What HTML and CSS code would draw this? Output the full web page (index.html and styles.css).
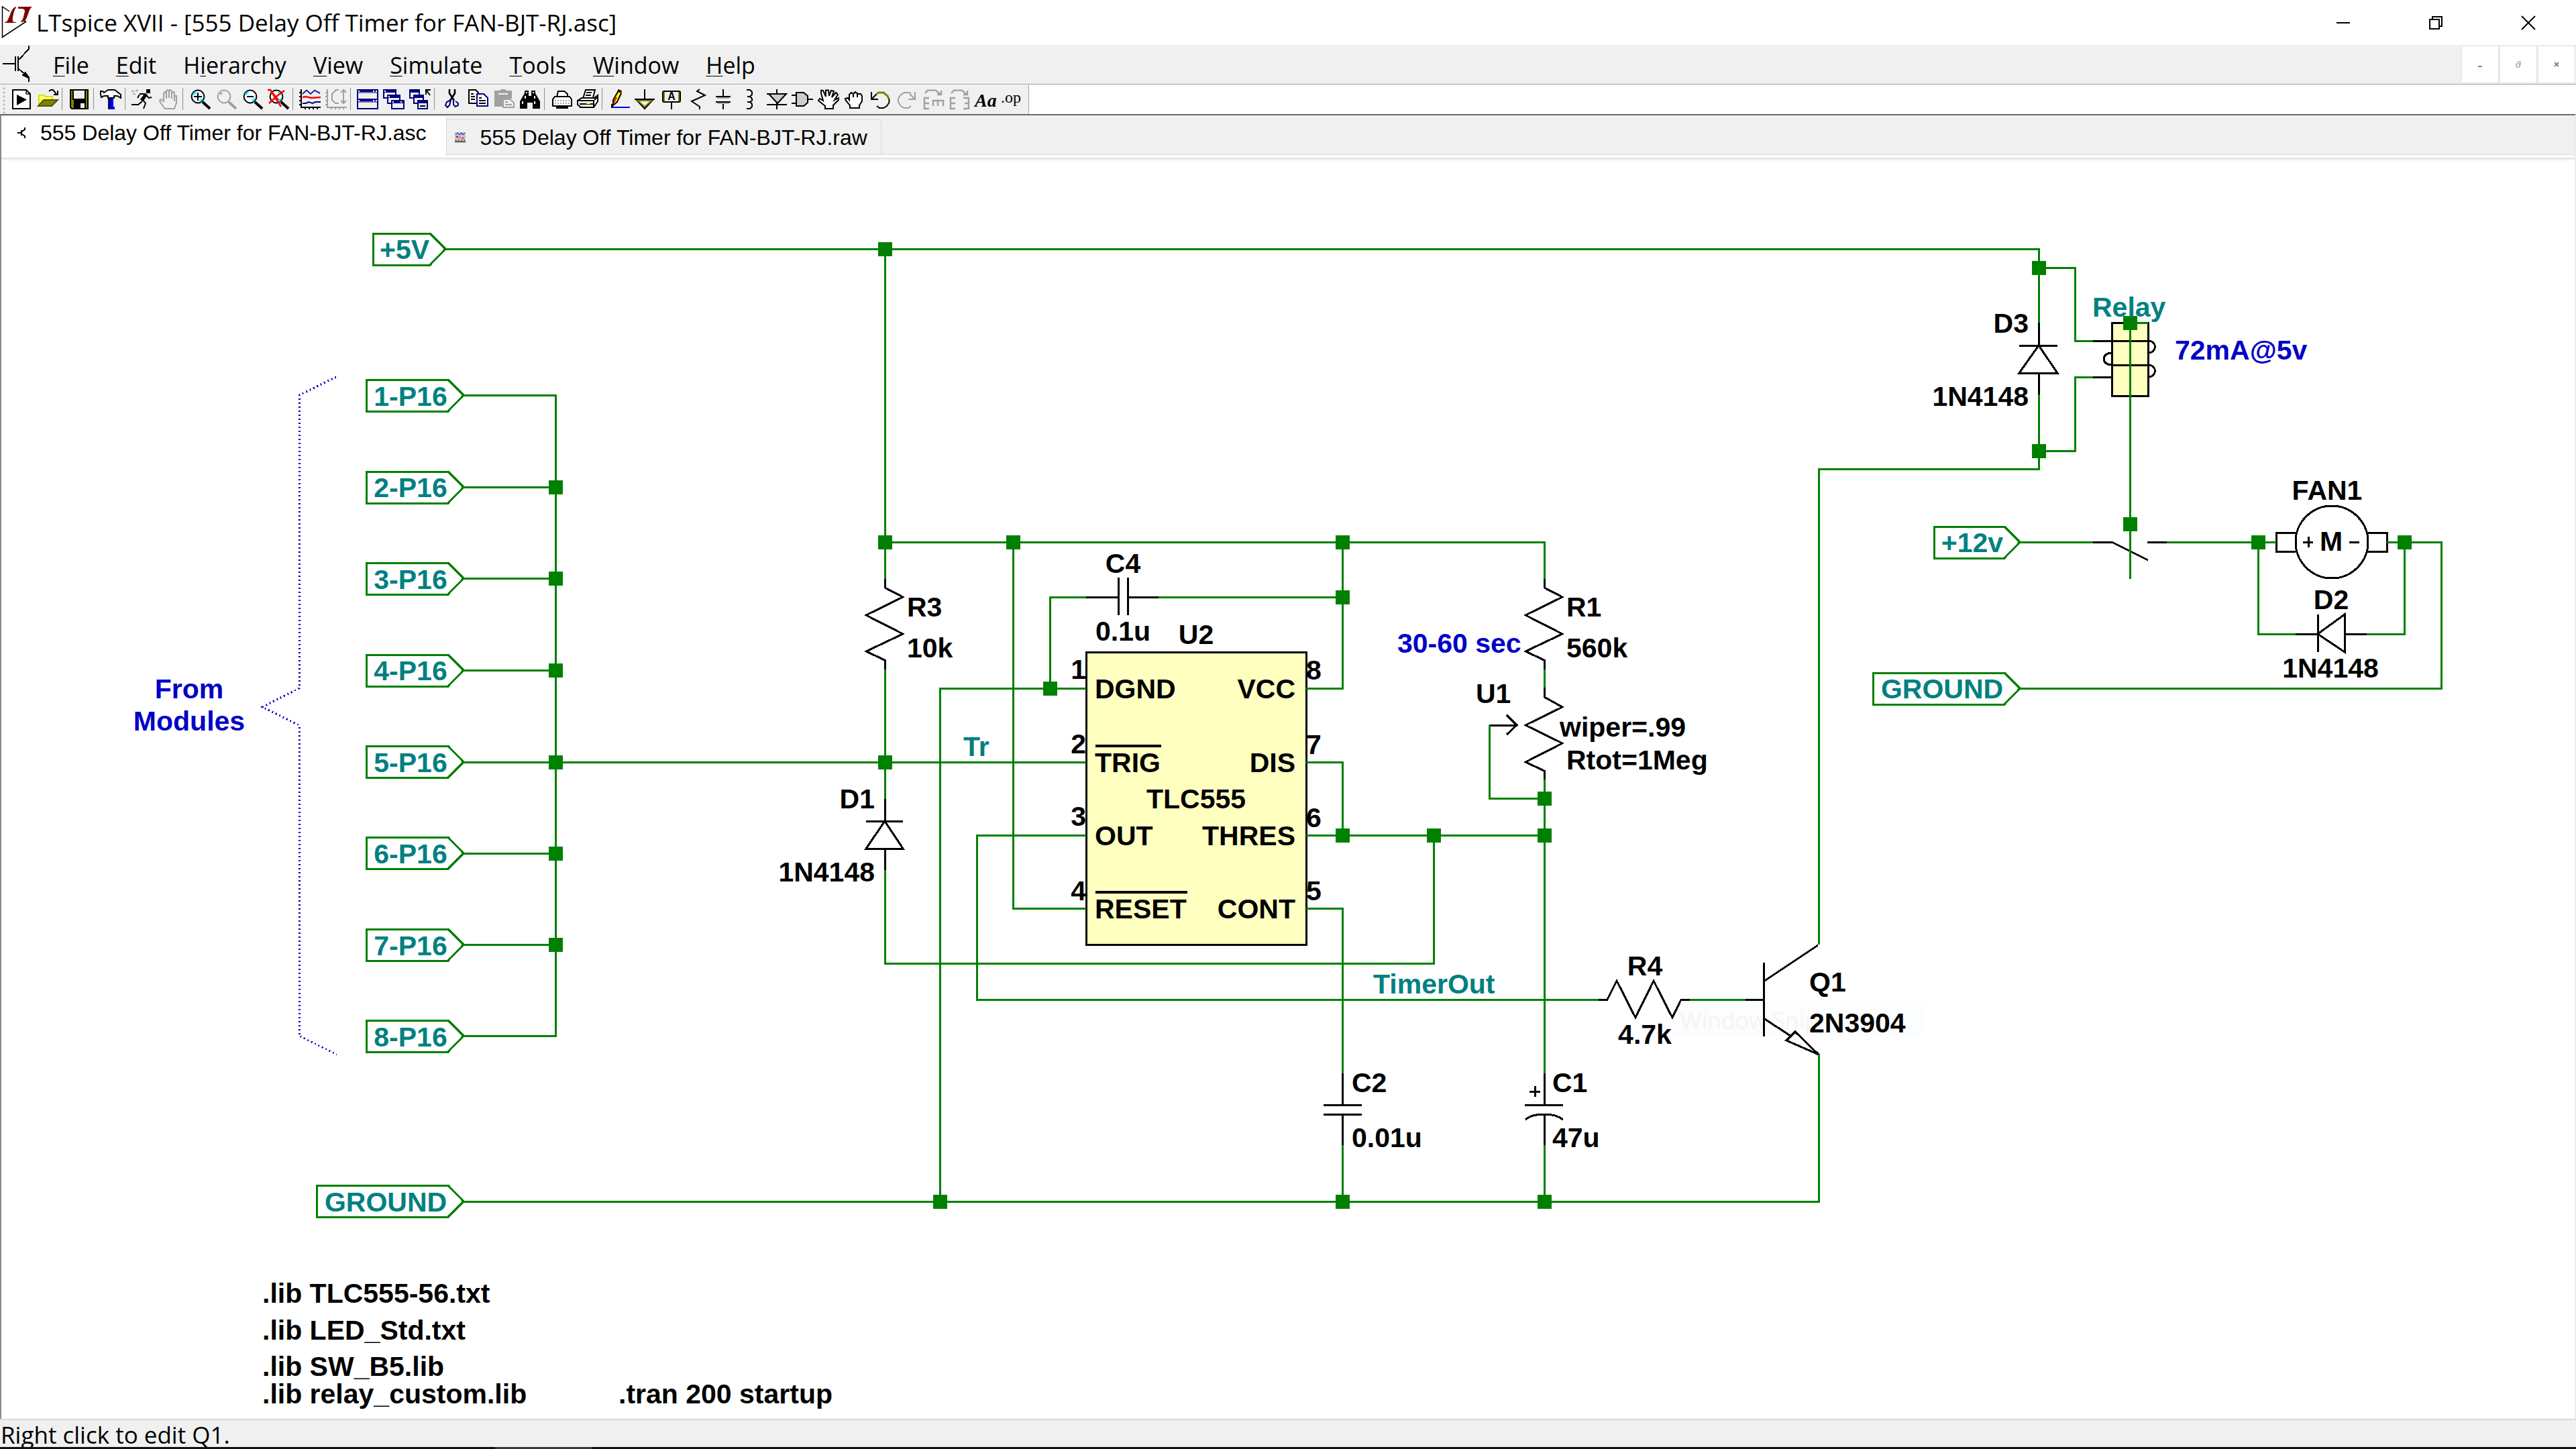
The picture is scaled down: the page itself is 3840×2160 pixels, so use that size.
FILE: index.html
```html
<!DOCTYPE html>
<html lang="en">
<head>
<meta charset="utf-8">
<title>LTspice XVII - [555 Delay Off Timer for FAN-BJT-RJ.asc]</title>
<link rel="stylesheet" href="styles.css">
</head>
<body>
<header class="titlebar">
  <svg class="app-icon" viewBox="0 0 52 52" aria-hidden="true">
    <path d="M14 9 3.500 2V47.500L39 24M39 24L34 23" fill="none" stroke="#000" stroke-width="1.500"/>
    <path d="M24 2C20 3 17 7 15 14L11 23Q10 25 7 25V26H24V25H21Q18 24 19 18C20 12 21 7 24 3Z" fill="#800000"/>
    <path d="M27 2H48Q45 4 44 7L40 18Q38 25 31 25V24Q34 22 35 17L37 9Q37 5 32 5H27Z" fill="#800000"/>
  </svg>
  <h1 class="caption">LTspice XVII - [555 Delay Off Timer for FAN-BJT-RJ.asc]</h1>
  <div class="window-buttons">
    <button class="window-button" aria-label="Minimize"><svg viewBox="0 0 20 20"><path d="M0 10H20"/></svg></button>
    <button class="window-button" aria-label="Restore"><svg viewBox="0 0 20 20"><path d="M1 5H15V19H1ZM5 5V1H19V15H15"/></svg></button>
    <button class="window-button" aria-label="Close"><svg class="smooth" viewBox="0 0 20 20"><path d="M0 0L20 20M20 0L0 20"/></svg></button>
  </div>
</header>

<nav class="menubar">
  <svg class="doc-icon" viewBox="0 0 20 28" aria-hidden="true">
    <path d="M0 13.500H9M9.500 8V19M11.500 8V19M12 10.500L19.500 2.500V0M12 17.500L19.500 23.500V27" fill="none" stroke="#000"/>
    <path d="M14 22L17 19L20 24V25Z" fill="#000"/>
  </svg>
  <button class="menu"><u>F</u>ile</button>
  <button class="menu"><u>E</u>dit</button>
  <button class="menu">H<u>i</u>erarchy</button>
  <button class="menu"><u>V</u>iew</button>
  <button class="menu"><u>S</u>imulate</button>
  <button class="menu"><u>T</u>ools</button>
  <button class="menu"><u>W</u>indow</button>
  <button class="menu"><u>H</u>elp</button>
  <div class="mdi-buttons">
    <button class="mdi-button" aria-label="Minimize document"><svg viewBox="0 0 8 10"><path d="M1 8H7"/></svg></button>
    <button class="mdi-button" aria-label="Restore document"><svg viewBox="0 0 8 10"><path d="M1 4H6V9H1ZM3 2V1H7V6" stroke-width="1"/></svg></button>
    <button class="mdi-button" aria-label="Close document"><svg viewBox="0 0 8 10"><path d="M1 2L7 8M7 2L1 8"/></svg></button>
  </div>
</nav>

<div class="toolstrip">
<div class="toolbar" role="toolbar" aria-label="Standard">
  <button class="tool" aria-label="New schematic"><svg viewBox="0 0 16 15"><path d="M1.500.5H11.500L14.500 3.500V14.500H1.500Z" fill="#fff"/><path d="M11.500.5V3.500H14.500" stroke-width=".7"/><path d="M4.500 4L12 7.800L4.500 12Z" fill="#000" stroke="none"/></svg></button>
  <button class="tool" aria-label="Open"><svg viewBox="0 0 16 15"><path d="M1.500 12V4.500H5L6.500 5.500H11.500V8" fill="#ff6" stroke="#dd0"/><path d="M1 12.500L5 8H15.500L11 12.500Z" fill="#808000" stroke="#550"/><path d="M9 1.500L10.500.5H12L14.500 3.500M15.500 1V4H12.500"/></svg></button>
  <span class="divider"></span>
  <button class="tool" aria-label="Save"><svg viewBox="0 0 16 15"><path d="M1.500.5H14.500V14.500H2.500L1.500 13.500Z" fill="#808000"/><rect x="3.500" y=".5" width="9" height="7" fill="#f0f0f0"/><path d="M4 9H13V14.500H4Z" fill="#000" stroke="none"/><path d="M9 10.500H12V14H9Z" fill="#f0f0f0" stroke="none"/><path d="M4 8.500H13"/></svg></button>
  <span class="divider"></span>
  <button class="tool" aria-label="Control panel"><svg viewBox="0 0 16 15"><path d="M6 6H9V15H6Z" fill="navy" stroke="none"/><path d="M8 7H10V13H11V15H8Z" fill="#00f" stroke="none"/><path d="M.5 1.500L2 1.500L3 2.500L6 .5H11L15.500 4V6.500L13 5H10.500V6.500H6V5H3L1 6L.5 4Z" fill="#fff"/></svg></button>
  <span class="divider"></span>
  <button class="tool" aria-label="Run"><svg viewBox="0 0 16 15"><path d="M11 0H14V3H11Z" fill="#000" stroke="none"/><path d="M6 3.500H9L11 4.500L13 6.500L15 6M6 4L4.500 6.500M8 9L5 11.500H0M8.500 8L10.500 10.500L9 14.500"/><path d="M11 3.500L7.500 8.500" stroke-width="2.500"/><path d="M0 1.500H2M3 1.500L5 .5M1 3.500H3" stroke="#aaa"/></svg></button>
  <button class="tool off" aria-label="Halt" disabled><svg viewBox="-1 0 16 15"><path d="M4.500 14.500L1.500 10.500L.5 8.500L1.500 7.500L3.500 9V3L4.500 2L5.500 3V7V1.500L6.500.5L7.500 1.500V6.500V1L8.500.5L9.500 1.500V7V2.500L11 2L11.500 3V9V5H13V10L11.500 14.500Z"/></svg></button>
  <span class="divider"></span>
  <button class="tool" aria-label="Zoom area"><svg viewBox="-1 0 16 15"><circle cx="5.500" cy="5.500" r="4.700" fill="#fff"/><path d="M2 4L4 2M7 9L9 7" stroke="#0ff" stroke-width="1.500"/><path d="M5.500 2.500V8.500M2.500 5.500H8.500"/><path d="M9 9.500L14.500 14.500" stroke-width="2"/></svg></button>
  <button class="tool off" aria-label="Pan" disabled><svg viewBox="-1 0 16 15"><circle cx="5.500" cy="5.500" r="4.700"/><path d="M4 2.500L2.500 4"/><path d="M9 9.500L14.500 14.500" stroke-width="2"/></svg></button>
  <button class="tool" aria-label="Zoom back"><svg viewBox="-1 0 16 15"><circle cx="5.500" cy="5.500" r="4.700" fill="#fff"/><path d="M2 4L4 2M7 9L9 7" stroke="#0ff" stroke-width="1.500"/><path d="M3 5.500H8"/><path d="M9 9.500L14.500 14.500" stroke-width="2"/></svg></button>
  <button class="tool" aria-label="Zoom full extents"><svg viewBox="0 0 16 15"><circle cx="6.500" cy="5.500" r="4.700" fill="#fff"/><path d="M8 9L10 7M8 2L10 4" stroke="#0ff" stroke-width="1.500"/><path d="M10 9.500L15.500 14.500" stroke-width="2"/><path d="M0 .5H2L6 7L10 13M12.500 1L7 5L1 10.500M3 2L8 8" stroke="red" stroke-width="1.300"/></svg></button>
  <span class="divider"></span>
  <button class="tool" aria-label="Autorange"><svg viewBox="0 0 16 15"><path d="M1.500 0V13.500H16M0 2.500H2M0 5.500H2M0 8.500H2M0 11.500H2M4.500 13V15M7.500 13V15M10.500 13V15M13.500 13V15"/><path d="M2.500 3.500L5.500.8L8.500 3.500L11.500.8L15.500 3" stroke="#2020a0"/><path d="M2.500 6L5 5.500L9 6.500L16 6" stroke="red" stroke-width="1.200"/><path d="M2.500 10.500H5L7 9.500L10 10.500L12 9.500H16" stroke="#000080"/></svg></button>
  <button class="tool off" aria-label="Pick visible traces" disabled><svg viewBox="0 0 16 15"><path d="M1.500 0V13.500H16M0 2.500H2M0 5.500H2M0 8.500H2M0 11.500H2M4.500 13V15M7.500 13V15M10.500 13V15M13.500 13V15M10 .5H8L5 3.500V8L7.500 10.500H10M13.500.5V11M11.500 2.500L13.500.5L15.500 2.500M11.500 8.500L13.500 10.500L15.500 8.500"/></svg></button>
  <span class="divider"></span>
  <button class="tool" aria-label="Tile windows"><svg viewBox="0 0 16 15"><path d="M.5.5H15.500V14.500H.5ZM0 1.500H16M0 7.500H16M0 8.500H16" stroke="navy"/><path d="M1 2.500H15M1 9.500H15" stroke="navy" stroke-width=".5"/><path d="M12 1.500H13M14 1.500H15M12 8.500H13M14 8.500H15M1 1.500H2M1 8.500H2" stroke="#fff"/></svg></button>
  <button class="tool" aria-label="Cascade windows"><svg viewBox="0 0 16 15"><g fill="#f0f0f0" stroke="navy"><path d="M.5.5H9.500V6.500H.5Z"/><path d="M0 1.500H10" stroke-width="2"/><path d="M3.500 4.500H12.500V10.500H3.500Z"/><path d="M3 5.500H13" stroke-width="2"/><path d="M6.500 8.500H15.500V14.500H6.500Z"/><path d="M6 9.500H16" stroke-width="2"/></g><path d="M1 1.500H2M4 5.500H5M7 9.500H8M13 9.500H14" stroke="#fff"/></svg></button>
  <button class="tool" aria-label="Close all windows"><svg viewBox="0 0 16 15"><g fill="#f0f0f0" stroke="navy"><path d="M.5.5H7.500V6.500H.5Z"/><path d="M0 1.500H8" stroke-width="2"/><path d="M3.500 4.500H10.500V10.500H3.500Z"/><path d="M3 5.500H11" stroke-width="2"/><path d="M6.500 8.500H13.500V14.500H6.500Z"/><path d="M6 9.500H14" stroke-width="2"/></g><path d="M8 12.500H12M12.500 4V.5H16M13 1L15.500 4.500"/></svg></button>
  <span class="divider"></span>
  <button class="tool" aria-label="Cut"><svg viewBox="-1 0 16 15"><path d="M5.500 0V3L9 8.500M9.500 0V3L6 8.500" stroke-width="1.300"/><path d="M6.500 8L3.500 9.500L2.500 12L4 13.500L5.500 12ZM8.500 8V11.500L10 13L12 12V10.500L10 9" stroke="navy"/></svg></button>
  <button class="tool" aria-label="Copy"><svg viewBox="0 0 16 15"><path d="M1.500.5H6.500L8.500 2.500V10.500H1.500Z" fill="#fff"/><path d="M3 3.500H5M3 5.500H6M3 7.500H6"/><path d="M7.500 3.500H12.500L15.500 6.500V12.500H7.500Z" fill="#fff" stroke="navy"/><path d="M9 6.500H11M9 8.500H14M9 10.500H14"/></svg></button>
  <button class="tool off" aria-label="Paste" disabled><svg viewBox="0 0 16 15"><path d="M1 1H5L6 0H9L10 1H14V7H8V13H1Z" fill="#a0a0a0" stroke="none"/><path d="M4 3.500H11" stroke="#f0f0f0"/><path d="M7.500 7.500H12.500L15.500 10V13.500H7.500Z" fill="#f0f0f0"/><path d="M9 9.500H11M9 11.500H14"/></svg></button>
  <button class="tool" aria-label="Find"><svg viewBox="0 0 16 15"><path d="M4 1H7V5H9V1H12V3L15.500 9V14.500H10V10H6V14.500H.5V9L4 3Z" fill="#000" stroke="none"/><path d="M5 2.500H6M10 2.500H11M4.500 5V7M2.500 9V11M11.500 5V7M11.500 9V11" stroke="#fff"/></svg></button>
  <span class="divider"></span>
  <button class="tool" aria-label="Print"><svg viewBox="0 0 16 15"><path d="M4.500 6L5.500 1.500H10L12.500 3.500V6" fill="#fff"/><path d="M1.500 7.500L3 5.500H14L15.500 7.500V12.500H1.500Z" fill="#fff"/><path d="M3 8.500H14M3 10.500H14" stroke="#aaa" stroke-dasharray="1 1"/><path d="M4 13.500H13" stroke-width="2"/></svg></button>
  <button class="tool" aria-label="Print setup"><svg viewBox="0 0 16 15"><path d="M4.500 7L6.500.5H13.500L12 6" fill="#fff"/><path d="M7 2.500H11M6.500 4.500H10.500"/><path d="M.5 8.500L3.500 6.500H13L15.500 4.500V9L12.500 13.500H3L.5 11.500Z" fill="#fff"/><path d="M.5 8.500H12.500V13M2 13.500H12M2 11H12M13 8L15 6"/><path d="M7 10.500H10" stroke="#ff0"/></svg></button>
  <span class="divider"></span>
  <button class="tool" aria-label="Wire"><svg viewBox="0 0 16 15"><path d="M7.500 1L3.500 8V12L6.500 9.500L9.500 3" fill="#ff0"/><path d="M6 6L4 10" stroke="red"/><path d="M7 0L10 1V3L7 2Z" fill="#000" stroke="none"/><path d="M9 1H10V3H9Z" fill="red" stroke="none"/><path d="M2 13.500H16" stroke="#00f"/><path d="M2.500 11V14"/></svg></button>
  <button class="tool" aria-label="Ground"><svg viewBox="0 0 16 15"><path d="M7.500 0V8M0 7.500H15M1 7.500L7.500 14.500L14 7.500"/><path d="M2.500 8.500L7.500 13L12.500 8.500Z" stroke="#808000" fill="#f0f0f0"/></svg></button>
  <button class="tool" aria-label="Label net"><svg viewBox="0 0 16 15"><rect x="1.500" y="1.500" width="13" height="8" rx="1" fill="#f0f0f0"/><path d="M2.500 2V9M13.500 2V9" stroke="#808000"/><path d="M8 10V15"/><text x="8" y="8" class="glyph sans" text-anchor="middle">A</text></svg></button>
  <button class="tool" aria-label="Resistor"><svg viewBox="-1 0 16 15"><path d="M8.500 0L6.500 1.500L12.500 4.500L2.500 9L8.500 13V15"/></svg></button>
  <button class="tool" aria-label="Capacitor"><svg viewBox="0 0 16 15"><path d="M2 5.500H13M2 9.500H13M7.500 0V5M7.500 10V15"/><path d="M3 6.500H12M3 10.500H12" stroke="#aaa"/></svg></button>
  <button class="tool" aria-label="Inductor"><svg viewBox="0 0 16 15"><path d="M5.500.5H8L9.500 2V4L8 5.500H6H8L9.500 7V8.500L8 9.500H6H8L9.500 11V13L8 14.500H5.500"/></svg></button>
  <button class="tool" aria-label="Diode"><svg viewBox="-1 0 16 15"><path d="M1.500 3.500H14.500L8 10.500Z" fill="#ccc"/><path d="M0 3.500H15M0 11.500H15M7.500 0V3M7.500 10V15"/></svg></button>
  <button class="tool" aria-label="Component"><svg viewBox="0 0 16 15"><path d="M3.500 2.500H9L12 5V10L9 12.500H3.500Z" fill="#ccc"/><path d="M0 4.500H3M0 10.500H3M12 7.500H16"/></svg></button>
  <button class="tool" aria-label="Move"><svg viewBox="0 0 16 15"><path d="M5.500 14.500V12.500L.5 8.500L1.500 7L4 8.500L2.500 3V.8L4 1L6 5.500V.8L8 .8L8.500 5L10 1L12 1.500L10.500 6L13.500 2.500L15 4L12.500 8L15.500 6.500V8L11.500 12V14.500Z" fill="#fff"/><path d="M12 8.500H13" stroke="teal"/></svg></button>
  <button class="tool" aria-label="Drag"><svg viewBox="0 0 16 15"><path d="M4.500 14V12L1.500 8.500L1 7L3 6.500L4 8V4L5.500 2.500L7 3.500L8.500 2L10.500 3.500L12.500 3.500L13.500 5V9L11.500 12V14Z" fill="#fff"/><path d="M7 3V6M10 3V6"/></svg></button>
  <button class="tool" aria-label="Undo"><svg viewBox="0 0 16 15"><path d="M5 3L7 2.500H10L13 5L14 7" stroke="#808000" stroke-width="1.500"/><path d="M1 2V7.500H6M1.500 7L5 3.500M14.200 7V10L12.500 12.500L10 14H7L5 12.500" /></svg></button>
  <button class="tool off" aria-label="Redo" disabled><svg viewBox="0 0 16 15"><path d="M11 3L9 2.500H6L3 4.500L1.500 7V9.500L3.500 12.500L6 14H9L11 12.500M14 2V7.500H9M13.500 7L10 3.500"/></svg></button>
  <button class="tool off" aria-label="Rotate" disabled><svg viewBox="0 0 16 15"><path d="M2 3L4 .8H10L13 3.500M14 1V4H11M5 6.500H1.500V14.500H5M2 10.500H5M8 12.500V8.500H15.500V12.500M11.500 9V12.500" stroke-width="1.200"/></svg></button>
  <button class="tool off" aria-label="Mirror" disabled><svg viewBox="0 0 16 15"><path d="M2 3L4 .8H10L13 3.500M14 1V4H11M5 6.500H1.500V14.500H5M2 10.500H5M11 6.500H15V14.500H11M12 10.500H15" stroke-width="1.200"/></svg></button>
  <button class="tool" aria-label="Text"><svg viewBox="0 0 16 15"><text x="0" y="13" class="glyph serif">Aa</text></svg></button>
  <button class="tool" aria-label="SPICE directive"><svg viewBox="0 0 16 15"><text x="0" y="10" class="glyph op">.op</text></svg></button>
</div>
</div>

<main class="workspace">
<div class="tabs" role="tablist">
  <button class="tab active" role="tab" aria-selected="true"><svg viewBox="0 0 12 16"><path d="M0 8H6M6 4V12M7 6L11 3V0M7 10L11 13V16" stroke="#000" stroke-width="2" fill="none"/></svg>555 Delay Off Timer for FAN-BJT-RJ.asc</button>
  <button class="tab" role="tab" aria-selected="false"><svg viewBox="0 0 16 16"><path d="M0 0H16V16H0Z" fill="#c0c0c0"/><path d="M1 4L4 1L7 4L10 1L12 4L15 1" stroke="#00f" fill="none"/><path d="M2 7H5M11 9H13M7 8H8" stroke="red" stroke-width="2"/><path d="M0 14H16M1 12H2M5 12H6M10 12H11M14 12H15" stroke="#000"/></svg>555 Delay Off Timer for FAN-BJT-RJ.raw</button>
</div>
<svg class="schematic" viewBox="2 239 3836 1876" role="img" aria-label="555 delay off timer schematic">
  <g class="hint">
    <rect x="2493" y="1492" width="373" height="53"/>
    <text x="2505" y="1534">Window Snip</text>
  </g>
  <g transform="translate(-1 -1)">
  <g class="body">
    <rect x="1620" y="973" width="328" height="436"/>
    <rect x="3149" y="482" width="54" height="109"/>
  </g>
  <g class="part">
    <!-- R3, R1, U1, R4 -->
    <path d="M1320 864V877L1347 891L1292 918L1347 946L1292 972L1320 985V999"/>
    <path d="M2303 864V877L2330 891L2275 918L2330 946L2275 972L2303 985V999"/>
    <path d="M2303 1026V1040L2330 1055L2275 1082L2330 1109L2275 1137L2303 1150V1163M2221 1082H2261M2247 1067L2262 1082L2247 1096"/>
    <path d="M2384 1491H2397L2411 1463L2439 1518L2466 1463L2494 1518L2507 1491H2520"/>
    <!-- C4, C2, C1 -->
    <path d="M1620 891H1668M1668 862V918M1682 862V918M1682 891H1728"/>
    <path d="M2002 1601V1648M1974 1648H2031M1974 1662H2031M2002 1662V1708"/>
    <path d="M2303 1601V1648M2274 1648H2331M2275 1670Q2284 1662 2303 1662Q2321 1662 2331 1670M2303 1662V1708M2281 1628H2297M2289 1620V1636"/>
    <!-- D1, D3, D2 -->
    <path d="M1320 1192V1225M1292 1225H1347M1320 1225L1292 1266H1347ZM1320 1266V1298"/>
    <path d="M3040 482V516M3011 516H3068M3040 516L3011 557H3068ZM3040 557V589"/>
    <path d="M3423 946H3456M3456 917V973M3456 946L3496 917V973ZM3496 946H3529"/>
    <!-- Q1 -->
    <path d="M2603 1491H2630M2630 1436V1546M2711 1410L2630 1464M2630 1519L2670 1545M2677 1539L2664 1552L2712 1573Z"/>
    <!-- relay coil, contact and motor -->
    <path d="M3121 509H3203C3217 509 3217 527 3203 527M3149 527C3133 527 3133 545 3149 545H3203C3217 545 3217 563 3203 563M3121 563H3149"/>
    <path d="M3121 809H3149L3203 836M3202 809H3231"/>
    <ellipse cx="3477" cy="809" rx="54" ry="54"/>
    <path d="M3423 795H3394V823H3423M3530 795H3559V823H3530M3434 809H3449M3442 801V817M3503 809H3518"/>
    <path class="bar" d="M1634 1113H1732M1634 1331H1771"/>
  </g>
  <g class="wire">
    <path d="M664 372H3040V482M3040 400H3094V509H3121M3121 563H3094V673H3040M3040 589V700H2712V1409"/>
    <path d="M691 590H829V1545H691M691 727H829M691 863H829M691 1000H829M691 1273H829M691 1409H829M691 1137H1620"/>
    <path d="M1320 372V864M1320 999V1192M1320 1298V1437H2138V1246"/>
    <path d="M1320 809H2303V864M2303 999V1026M2303 1163V1601M2303 1708V1792"/>
    <path d="M1620 891H1566V1027M1728 891H2002M2002 809V1027H1948M1620 1027H1402V1792"/>
    <path d="M1511 809V1355H1620M1620 1246H1457V1491H2384M2520 1491H2603"/>
    <path d="M1948 1137H2002V1246M1948 1246H2303M1948 1355H2002V1601M2002 1708V1792"/>
    <path d="M2221 1082V1191H2303M691 1792H2712V1572"/>
    <path d="M3176 482V864M3187 482H3203M3012 809H3121M3231 809H3394M3559 809H3640V1027H3012M3367 809V946H3423M3529 946H3585V809"/>
    <path d="M557 349H642L665 372L642 396H557Z"/>
    <path d="M547 567H669L692 590L669 614H547ZM547 704H669L692 727L669 751H547ZM547 840H669L692 863L669 887H547ZM547 977H669L692 1000L669 1024H547ZM547 1113H669L692 1137L669 1160H547ZM547 1249H669L692 1273L669 1296H547ZM547 1386H669L692 1409L669 1433H547ZM547 1522H669L692 1545L669 1569H547Z"/>
    <path d="M473 1768H669L692 1792L669 1815H473ZM2884 786H2989L3012 809L2989 833H2884ZM2793 1004H2989L3012 1027L2989 1051H2793Z"/>
  </g>
  <!-- junctions: one square per zero-length segment -->
  <path class="junction" d="M1320 372h0M1320 809h0M1320 1137h0M1511 809h0M2002 809h0M2002 891h0M1566 1027h0M2002 1246h0M2138 1246h0M2303 1191h0M2303 1246h0M1402 1792h0M2002 1792h0M2303 1792h0M829 727h0M829 863h0M829 1000h0M829 1137h0M829 1273h0M829 1409h0M3040 400h0M3040 673h0M3176 482h0M3176 782h0M3367 809h0M3585 809h0"/>
  <path class="bracket" d="M502 563L447 590V1027L392 1055L447 1082V1545L503 1573"/>
  </g>
  <g class="net mid">
    <text x="603" y="386">+5V</text>
    <text x="612" y="605">1-P16</text>
    <text x="612" y="741">2-P16</text>
    <text x="612" y="878">3-P16</text>
    <text x="612" y="1014">4-P16</text>
    <text x="612" y="1151">5-P16</text>
    <text x="612" y="1287">6-P16</text>
    <text x="612" y="1424">7-P16</text>
    <text x="612" y="1560">8-P16</text>
    <text x="575" y="1806">GROUND</text>
    <text x="2940" y="823">+12v</text>
    <text x="2895" y="1041">GROUND</text>
  </g>
  <g class="net">
    <text x="1436" y="1127">Tr</text>
    <text x="2047" y="1481">TimerOut</text>
    <text x="3119" y="472">Relay</text>
  </g>
  <g class="note">
    <text class="mid" x="282" y="1041">From</text>
    <text class="mid" x="282" y="1089">Modules</text>
    <text x="2083" y="973">30-60 sec</text>
    <text x="3242" y="536">72mA@5v</text>
  </g>
  <g>
    <text x="1352" y="919">R3</text>
    <text x="1352" y="980">10k</text>
    <text x="2335" y="919">R1</text>
    <text x="2335" y="980">560k</text>
    <text x="2200" y="1048">U1</text>
    <text x="2325" y="1098">wiper=.99</text>
    <text x="2335" y="1147">Rtot=1Meg</text>
    <text x="2697" y="1478">Q1</text>
    <text x="2697" y="1539">2N3904</text>
    <text x="2015" y="1628">C2</text>
    <text x="2015" y="1710">0.01u</text>
    <text x="2314" y="1628">C1</text>
    <text x="2314" y="1710">47u</text>
    <text x="1632" y="1041">DGND</text>
    <text x="1632" y="1151">TRIG</text>
    <text x="1632" y="1260">OUT</text>
    <text x="1632" y="1369">RESET</text>
    <text x="1947" y="1013">8</text>
    <text x="1947" y="1124">7</text>
    <text x="1947" y="1233">6</text>
    <text x="1947" y="1342">5</text>
    <text x="391" y="1942">.lib TLC555-56.txt</text>
    <text x="391" y="1997">.lib LED_Std.txt</text>
    <text x="391" y="2051">.lib SW_B5.lib</text>
    <text x="391" y="2092">.lib relay_custom.lib</text>
    <text x="922" y="2092">.tran 200 startup</text>
  </g>
  <g class="mid">
    <text x="1674" y="854">C4</text>
    <text x="1674" y="955">0.1u</text>
    <text x="1783" y="960">U2</text>
    <text x="1783" y="1205">TLC555</text>
    <text x="2452" y="1454">R4</text>
    <text x="2452" y="1556">4.7k</text>
    <text x="3469" y="745">FAN1</text>
    <text x="3475" y="821">M</text>
    <text x="3475" y="908">D2</text>
    <text x="3474" y="1010">1N4148</text>
  </g>
  <g class="end">
    <text x="1304" y="1205">D1</text>
    <text x="1304" y="1314">1N4148</text>
    <text x="3024" y="496">D3</text>
    <text x="3024" y="605">1N4148</text>
    <text x="1619" y="1012">1</text>
    <text x="1619" y="1123">2</text>
    <text x="1619" y="1231">3</text>
    <text x="1619" y="1342">4</text>
    <text x="1931" y="1041">VCC</text>
    <text x="1931" y="1151">DIS</text>
    <text x="1931" y="1260">THRES</text>
    <text x="1931" y="1369">CONT</text>
  </g>
</svg>
</main>

<footer class="statusbar">Right click to edit Q1.</footer>
<div class="taskbar"><span class="running"></span></div>
</body>
</html>
```
FILE: styles.css
```css
* {
  box-sizing: border-box;
}

body {
  margin: 0;
  min-height: 100vh;
  display: flex;
  flex-direction: column;
  overflow: hidden;
  background: #fff;
  color: #000;
  font: 34px/48px "Open Sans", "Noto Sans", sans-serif;
}

button {
  margin: 0;
  padding: 0;
  border: 0;
  background: none;
  color: inherit;
  font: inherit;
}

svg {
  display: block;
}

/* Title bar */
.titlebar {
  display: flex;
  align-items: center;
  height: 67px;
}

.app-icon {
  width: 52px;
  height: 52px;
}

.caption {
  flex: 1;
  margin: 0;
  padding: 0 0 0 2px;
  font: inherit;
  font-size: 35px;
}

.window-buttons {
  display: flex;
  padding-right: 2px;
}

.window-button {
  width: 138px;
  height: 64px;
  display: grid;
  place-items: center;
}

.window-button svg {
  width: 20px;
  height: 20px;
  fill: none;
  stroke: #000;
  stroke-width: 2;
  overflow: visible;
  shape-rendering: crispEdges;
}

.window-button .smooth {
  shape-rendering: auto;
}

/* Menu bar */
.menubar {
  display: flex;
  align-items: center;
  height: 58px;
  background: #f0f0f0;
}

.doc-icon {
  width: 40px;
  height: 56px;
  margin: 0 15px 0 4px;
  shape-rendering: crispEdges;
}

.menu {
  height: 58px;
  padding: 2px 20px 0;
}

.menu u {
  text-decoration-thickness: 1px;
  text-underline-offset: 3px;
}

.mdi-buttons {
  display: flex;
  gap: 1px;
  margin-left: auto;
  padding-right: 1px;
  background: #f0f0f0;
}

.mdi-button {
  width: 56px;
  height: 56px;
  display: grid;
  place-items: center;
  border: 1px solid #e3e3e3;
  background: #fff;
}

.mdi-button svg {
  width: 8px;
  height: 10px;
  fill: none;
  stroke: #7a8796;
  stroke-width: 2;
}

/* Toolbar */
.toolstrip {
  display: flex;
  height: 45px;
  border-top: 1px solid #a0a0a0;
  background: #fff;
}

.toolbar {
  display: flex;
  align-items: center;
  margin-top: 1px;
  padding: 0 6px 2px 12px;
  border-right: 1px solid #a0a0a0;
  background: radial-gradient(circle, #b8b8b8 1px, transparent 2px) 2px 2px / 8px 6px repeat-y #f0f0f0;
}

.tool {
  width: 39px;
  height: 40px;
  padding-left: 4px;
}

.tool svg {
  width: 32px;
  height: 30px;
  fill: none;
  stroke: #000;
  overflow: visible;
}

.tool.off svg {
  stroke: #a0a0a0;
}

.divider {
  width: 8px;
  height: 33px;
  background: linear-gradient(#909090, #909090) 2px 0 / 1px 100% no-repeat;
}

.glyph {
  fill: #000;
  stroke: none;
}

.sans {
  font: bold 8px "Liberation Sans", sans-serif;
}

.serif {
  font: italic bold 14px "Liberation Serif", serif;
}

.op {
  font: 12px "Liberation Serif", serif;
}

/* Document area */
.workspace {
  flex: 1;
  border: solid;
  border-width: 2px 2px 0;
  border-color: #6a6a6a #ececec #fff #8a8a8a;
}

.tabs {
  display: flex;
  align-items: stretch;
  height: 67px;
  padding: 0 2px 3px 0;
  border-bottom: 3px solid #f0f0f0;
  background: linear-gradient(#f0f0f0 58px, #d9d9d9 58px, #d9d9d9 59px, #fff 59px, #fff 63px, #d9d9d9 63px);
  font: 32px/40px "Liberation Sans", Arial, sans-serif;
}

.tab {
  display: flex;
  align-items: center;
  gap: 22px;
  margin: 6px 0 2px;
  padding: 0 20px 0 12px;
  border: 1px solid #d9d9d9;
  border-width: 1px 1px 1px 0;
}

.tab.active {
  margin: 0;
  padding: 0 29px 10px 24px;
  border-width: 1px 1px 0 0;
  background: #fff;
}

.tab svg {
  width: 16px;
  height: 16px;
}

.tab.active svg {
  width: 12px;
}

/* Schematic */
.schematic {
  width: 100%;
  height: auto;
  background: #fff;
  font: bold 41px "Liberation Sans", Arial, sans-serif;
  shape-rendering: crispEdges;
}

.body rect {
  fill: #ffffc0;
  stroke: #000;
  stroke-width: 3;
}

.part,
.wire {
  fill: none;
  stroke: #000;
  stroke-width: 3;
}

.part .bar {
  stroke-width: 4;
}

.wire {
  stroke: #008000;
}

.junction {
  stroke: #008000;
  stroke-width: 21;
  stroke-linecap: square;
}

.bracket {
  fill: none;
  stroke: #0000c8;
  stroke-width: 3;
  stroke-dasharray: 2 4;
}

.net {
  fill: #008080;
}

.note {
  fill: #0000c8;
}

.mid {
  text-anchor: middle;
}

.end {
  text-anchor: end;
}

.hint {
  fill: #f3f4f5;
  font: 34px "Open Sans", "Noto Sans", sans-serif;
}

.hint rect {
  fill: #fcfdff;
}

/* Status bar and the sliver of the taskbar below it */
.statusbar {
  height: 42px;
  padding-left: 1px;
  border-top: 2px solid #d9d9d9;
  background: #f0f0f0;
  font-size: 35px;
  line-height: 44px;
}

.taskbar {
  display: flex;
  height: 3px;
  background: #101314;
}

.running {
  width: 144px;
  margin-left: 738px;
  background: #3a3c3d;
}
```
